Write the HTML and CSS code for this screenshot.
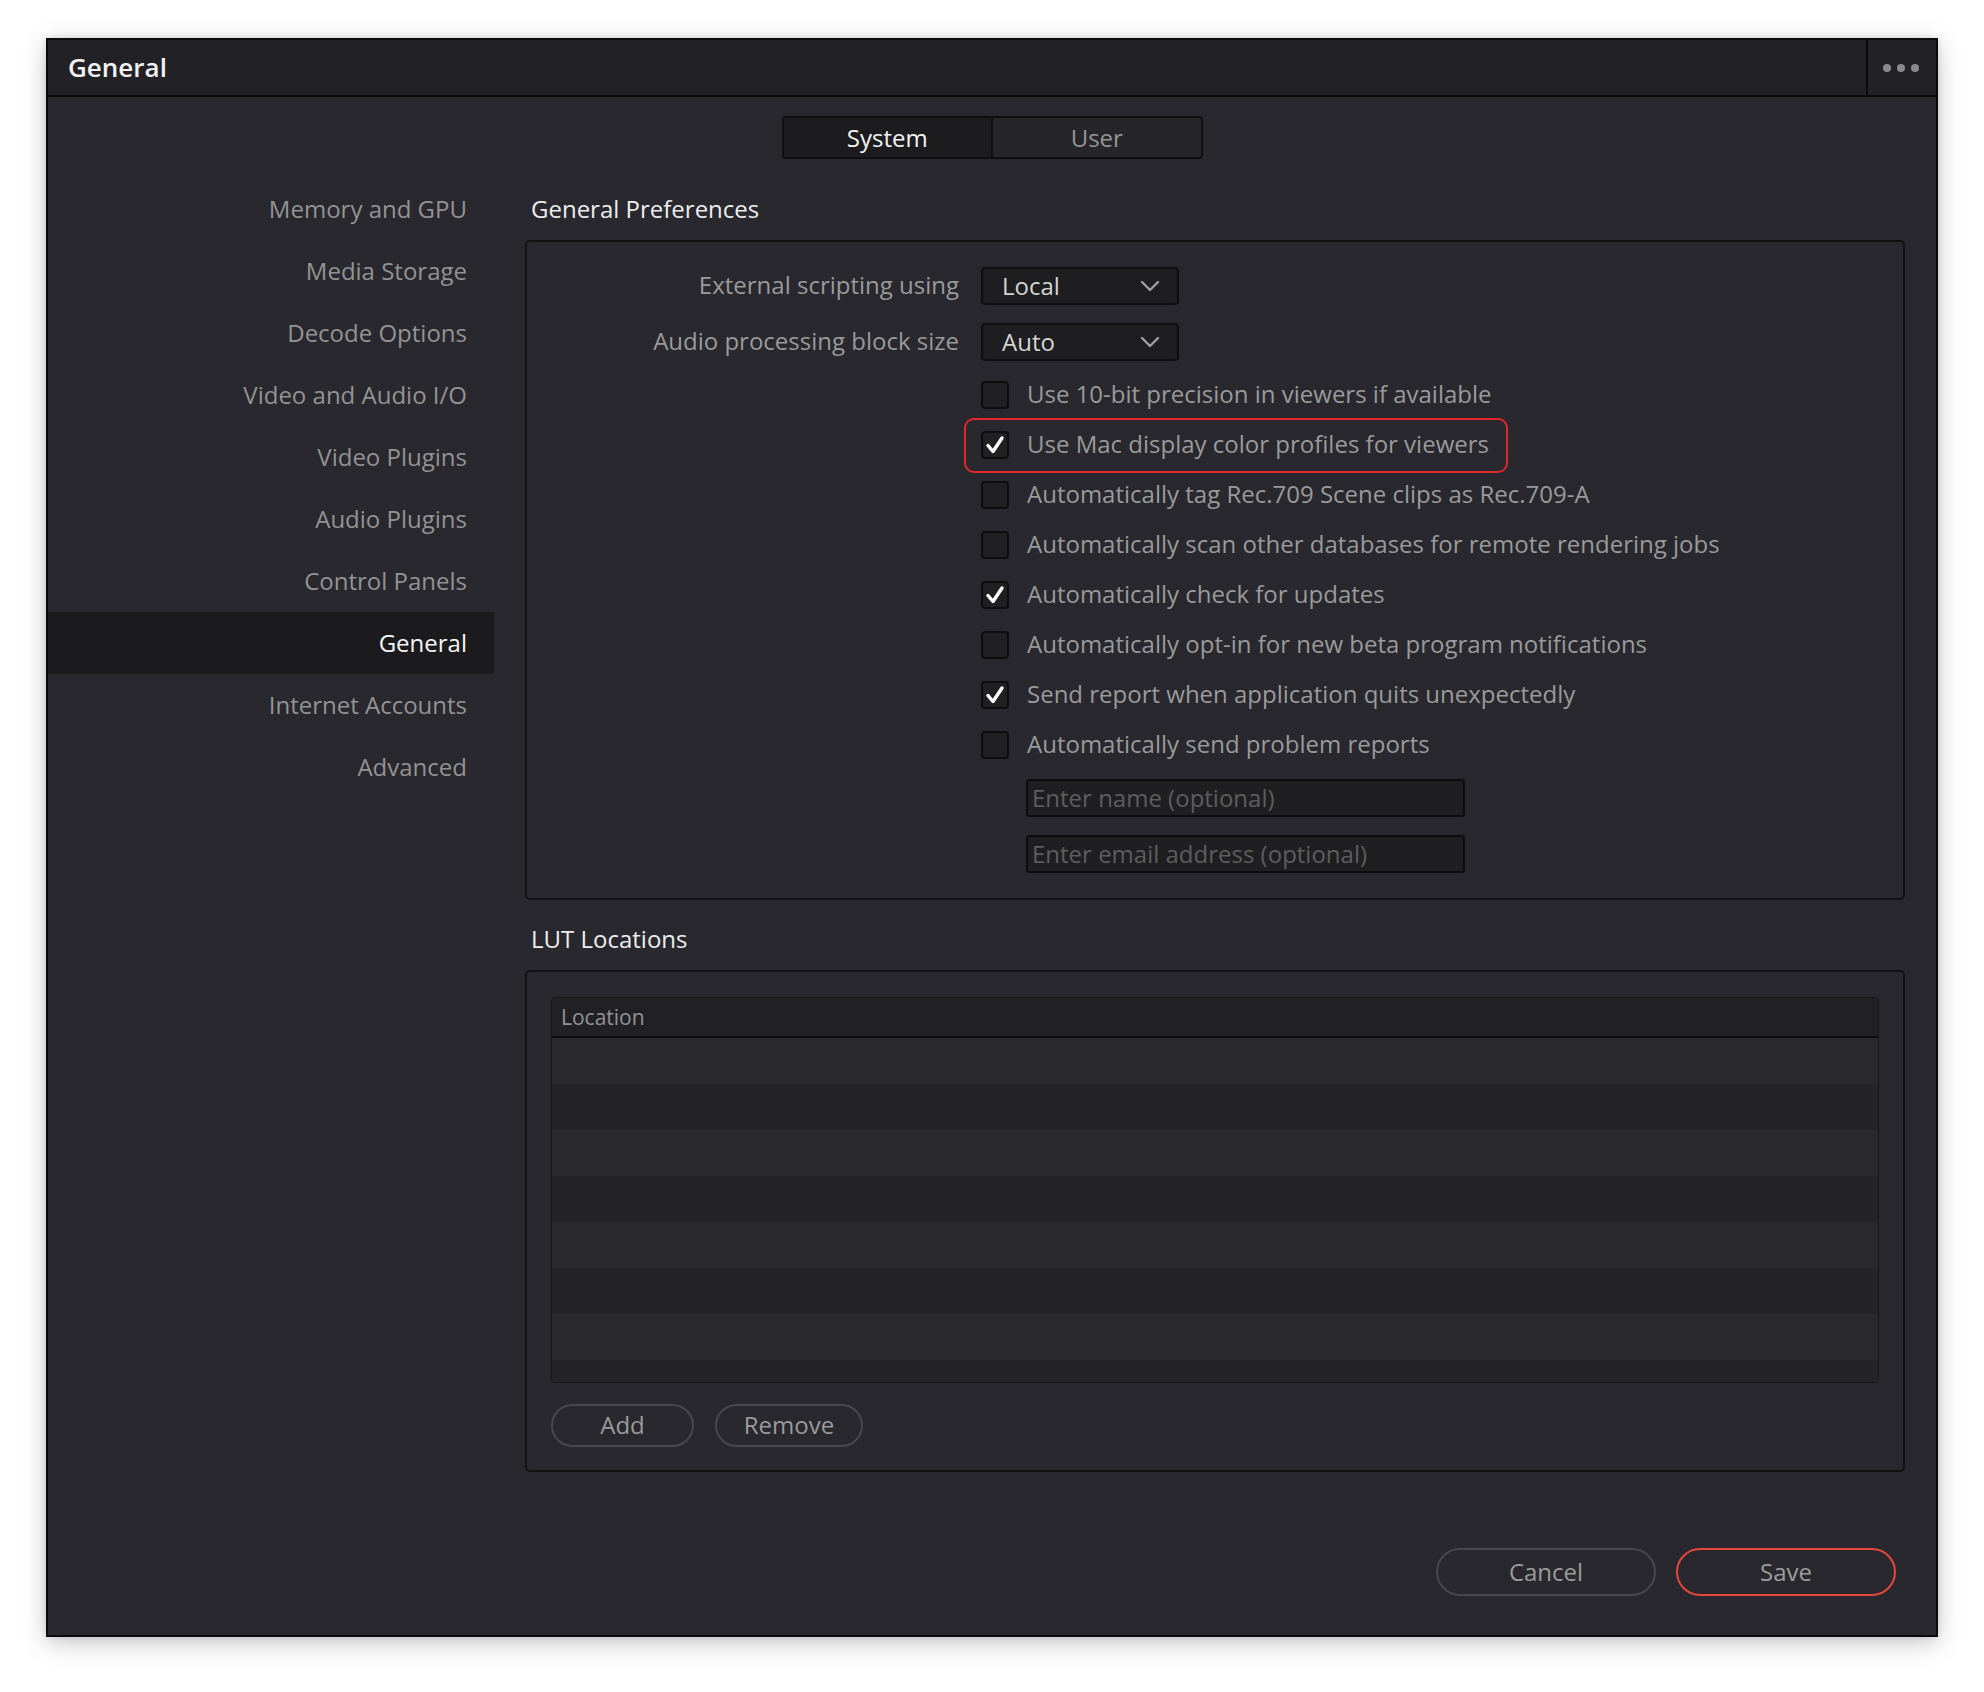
FILE: index.html
```html
<!DOCTYPE html>
<html lang="en">
<head>
<meta charset="utf-8">
<title>General</title>
<link rel="stylesheet" href="styles.css">
</head>
<body>
<div class="window">
  <div class="titlebar">
    <div class="title">General</div>
    <div class="more"><span class="dot"></span><span class="dot"></span><span class="dot"></span></div>
  </div>
  <div class="tabs-row">
    <div class="tabs">
      <div class="tab active">System</div>
      <div class="tab">User</div>
    </div>
  </div>
  <div class="columns">
    <nav class="sidebar">
      <div class="nav-item">Memory and GPU</div>
      <div class="nav-item">Media Storage</div>
      <div class="nav-item">Decode Options</div>
      <div class="nav-item">Video and Audio I/O</div>
      <div class="nav-item">Video Plugins</div>
      <div class="nav-item">Audio Plugins</div>
      <div class="nav-item">Control Panels</div>
      <div class="nav-item selected">General</div>
      <div class="nav-item">Internet Accounts</div>
      <div class="nav-item">Advanced</div>
    </nav>
    <main class="content">
      <h2 class="section-title">General Preferences</h2>
      <section class="panel prefs">
        <div class="label">External scripting using</div>
        <div class="select"><span>Local</span><svg class="chev" viewBox="0 0 20 12" width="20" height="12"><path d="M2 2 L10 10 L18 2" fill="none" stroke="#a0a0a0" stroke-width="2.4" stroke-linecap="round" stroke-linejoin="round"/></svg></div>
        <div class="label">Audio processing block size</div>
        <div class="select"><span>Auto</span><svg class="chev" viewBox="0 0 20 12" width="20" height="12"><path d="M2 2 L10 10 L18 2" fill="none" stroke="#a0a0a0" stroke-width="2.4" stroke-linecap="round" stroke-linejoin="round"/></svg></div>

        <div class="checks">
          <div class="check-row"><span class="box"></span><span class="check-label">Use 10-bit precision in viewers if available</span></div>
          <div class="check-row highlighted"><span class="box"><svg viewBox="0 0 28 28" width="28" height="28"><path d="M7 14.5 L12 20.5 L21 7" fill="none" stroke="#ffffff" stroke-width="3.4" stroke-linecap="round" stroke-linejoin="round"/></svg></span><span class="check-label">Use Mac display color profiles for viewers</span><span class="annot"></span></div>
          <div class="check-row"><span class="box"></span><span class="check-label">Automatically tag Rec.709 Scene clips as Rec.709-A</span></div>
          <div class="check-row"><span class="box"></span><span class="check-label">Automatically scan other databases for remote rendering jobs</span></div>
          <div class="check-row"><span class="box"><svg viewBox="0 0 28 28" width="28" height="28"><path d="M7 14.5 L12 20.5 L21 7" fill="none" stroke="#ffffff" stroke-width="3.4" stroke-linecap="round" stroke-linejoin="round"/></svg></span><span class="check-label">Automatically check for updates</span></div>
          <div class="check-row"><span class="box"></span><span class="check-label">Automatically opt-in for new beta program notifications</span></div>
          <div class="check-row"><span class="box"><svg viewBox="0 0 28 28" width="28" height="28"><path d="M7 14.5 L12 20.5 L21 7" fill="none" stroke="#ffffff" stroke-width="3.4" stroke-linecap="round" stroke-linejoin="round"/></svg></span><span class="check-label">Send report when application quits unexpectedly</span></div>
          <div class="check-row"><span class="box"></span><span class="check-label">Automatically send problem reports</span></div>
        </div>
        <div class="inputs">
          <div class="text-input">Enter name (optional)</div>
          <div class="text-input">Enter email address (optional)</div>
        </div>
      </section>

      <h2 class="section-title lut-title">LUT Locations</h2>
      <section class="panel lut">
        <div class="table">
          <div class="thead">Location</div>
          <div class="trow"></div>
          <div class="trow alt"></div>
          <div class="trow"></div>
          <div class="trow alt"></div>
          <div class="trow"></div>
          <div class="trow alt"></div>
          <div class="trow"></div>
          <div class="trow alt"></div>
        </div>
        <div class="lut-buttons">
          <div class="pill add">Add</div>
          <div class="pill remove">Remove</div>
        </div>
      </section>

      <div class="footer">
        <div class="pill big">Cancel</div>
        <div class="pill big save">Save</div>
      </div>
    </main>
  </div>
</div>
</body>
</html>
```
FILE: styles.css
```css
* { box-sizing: border-box; }
html, body { margin: 0; padding: 0; }
body {
  background: #ffffff;
  width: 1984px;
  height: 1692px;
  font-family: "Open Sans", "Noto Sans", "DejaVu Sans", sans-serif;
  font-size: 24px;
  color: #9a9a9a;
  overflow: hidden;
}
.window {
  margin: 38px 0 0 46px;
  width: 1892px;
  height: 1599px;
  background: #28282e;
  border: 2px solid #0b0b0c;
  box-shadow: 0 6px 24px rgba(0,0,0,0.22), 0 0 6px rgba(0,0,0,0.12);
  display: flex;
  flex-direction: column;
}
.titlebar {
  height: 57px;
  flex: none;
  background: #222226;
  border-bottom: 2px solid #0c0c0d;
  display: flex;
  align-items: stretch;
}
.title {
  flex: 1;
  padding-left: 20px;
  font-size: 26px;
  font-weight: 600;
  color: #f2f2f2;
  line-height: 55px;
}
.more {
  width: 70px;
  border-left: 2px solid #0c0c0d;
  display: flex;
  align-items: center;
  justify-content: center;
  gap: 6px;
  padding-right: 2px;
}
.dot {
  width: 8px;
  height: 8px;
  border-radius: 50%;
  background: #8a8a8c;
}
.tabs-row {
  display: flex;
  justify-content: center;
  margin-top: 19px;
}
.tabs {
  display: flex;
  width: 421px;
  height: 43px;
  border: 2px solid #0f0f11;
  border-radius: 4px;
  overflow: hidden;
}
.tab {
  flex: 1;
  text-align: center;
  line-height: 39px;
  font-size: 24px;
  background: #25252a;
  color: #959595;
}
.tab.active {
  background: #1c1c1f;
  color: #f4f4f4;
  border-right: 2px solid #0f0f11;
}
.columns {
  display: flex;
  margin-top: 19px;
  column-gap: 31px;
  padding-right: 31px;
  flex: 1;
}
.sidebar {
  width: 446px;
  flex: none;
}
.nav-item {
  height: 62px;
  line-height: 61px;
  text-align: right;
  padding-right: 27px;
  color: #939393;
}
.nav-item.selected {
  background: #1b1b1e;
  color: #f6f6f6;
}
.content {
  flex: 1;
  display: flex;
  flex-direction: column;
}
.section-title {
  margin: 0;
  height: 62px;
  line-height: 61px;
  padding-left: 6px;
  font-size: 24px;
  font-weight: 500;
  color: #ededed;
}
.lut-title { margin-top: 8px; }
.panel {
  border: 2px solid #111113;
  border-radius: 5px;
}
.prefs {
  height: 660px;
  display: grid;
  grid-template-columns: 432px 1fr;
  column-gap: 22px;
  row-gap: 18px;
  padding: 25px 0 25px 0;
  align-content: start;
}
.label {
  text-align: right;
  line-height: 36px;
  color: #9a9a9a;
}
.select {
  width: 198px;
  height: 38px;
  background: #1e1e21;
  border: 2px solid #0e0e10;
  border-radius: 4px;
  display: flex;
  align-items: center;
  justify-content: space-between;
  padding: 0 17px 0 19px;
  color: #d4d4d4;
  line-height: 32px;
}
.chev { display: block; }
.checks {
  grid-column: 2;
  margin-top: -9px;
}
.check-row {
  position: relative;
  height: 50px;
  display: flex;
  align-items: center;
}
.box {
  width: 28px;
  height: 28px;
  flex: none;
  background: #202023;
  border: 2px solid #0d0d0f;
  border-radius: 4px;
  display: flex;
  align-items: center;
  justify-content: center;
}
.box svg { display: block; margin: -2px; }
.check-label {
  margin-left: 18px;
  color: #9a9a9a;
  white-space: nowrap;
  line-height: 30px;
  margin-top: -2px;
}
.annot {
  position: absolute;
  left: -17px;
  top: -2px;
  width: 544px;
  height: 55px;
  border: 2px solid #e3262b;
  border-radius: 10px;
}
.inputs {
  grid-column: 2;
  margin-top: -9px;
  padding-left: 45px;
  display: flex;
  flex-direction: column;
  gap: 18px;
}
.text-input {
  width: 439px;
  height: 38px;
  background: #1f1f21;
  border: 2px solid #0d0d0f;
  border-radius: 3px;
  padding-left: 4px;
  line-height: 33px;
  color: #5d5d5f;
}
.lut {
  height: 502px;
  padding: 25px 24px 23px 24px;
  display: flex;
  flex-direction: column;
}
.table {
  height: 386px;
  border: 1px solid #161618;
  border-radius: 4px;
  overflow: hidden;
  background: #242428;
}
.thead {
  height: 40px;
  background: #212125;
  border-bottom: 2px solid #0f0f11;
  line-height: 38px;
  padding-left: 9px;
  font-size: 21px;
  color: #939393;
}
.trow { height: 46px; background: #29292e; }
.trow.alt { background: #242428; }
.lut-buttons {
  display: flex;
  gap: 21px;
  margin-top: 21px;
}
.pill {
  height: 43px;
  border: 2px solid #46484d;
  border-radius: 24px;
  text-align: center;
  line-height: 38px;
  color: #9a9a9a;
}
.pill.add { width: 143px; }
.pill.remove { width: 148px; }
.footer {
  display: flex;
  justify-content: flex-end;
  gap: 20px;
  margin-top: 76px;
  padding-right: 9px;
}
.pill.big {
  width: 220px;
  height: 48px;
  line-height: 43px;
  border-radius: 26px;
  color: #9c9c9c;
}
.pill.save { border-color: #e5473c; }
```
